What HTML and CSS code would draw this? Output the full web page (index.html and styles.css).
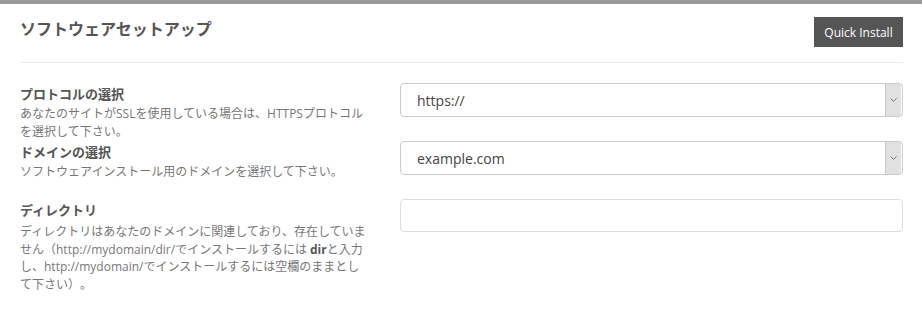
FILE: index.html
```html
<!DOCTYPE html>
<html lang="ja">
<head>
  <meta charset="UTF-8">
  <meta name="viewport" content="width=device-width, initial-scale=1.0">
  <title>ソフトウェアセットアップ</title>
  <link rel="stylesheet" href="styles.css">
</head>
<body>
  <div class="topbar"></div>

  <div class="panel">
    <div class="header">
      <h1>ソフトウェアセットアップ</h1>
      <button class="btn" type="button">Quick Install</button>
    </div>

    <div class="form">
      <div class="row">
        <div class="info">
          <div class="label">プロトコルの選択</div>
          <div class="desc">あなたのサイトがSSLを使用している場合は、HTTPSプロトコル<br>を選択して下さい。</div>
        </div>
        <div class="field">
          <div class="select">
            <select id="protocol">
              <option>https://</option>
              <option>http://</option>
            </select>
            <span class="arrow">
              <svg width="7" height="4" viewBox="0 0 7 4"><path d="M0.5 0.5 L3.5 3.3 L6.5 0.5" fill="none" stroke="#777" stroke-width="1"/></svg>
            </span>
          </div>
        </div>
      </div>

      <div class="row">
        <div class="info">
          <div class="label">ドメインの選択</div>
          <div class="desc">ソフトウェアインストール用のドメインを選択して下さい。</div>
        </div>
        <div class="field">
          <div class="select">
            <select id="domain">
              <option>example.com</option>
            </select>
            <span class="arrow">
              <svg width="7" height="4" viewBox="0 0 7 4"><path d="M0.5 0.5 L3.5 3.3 L6.5 0.5" fill="none" stroke="#777" stroke-width="1"/></svg>
            </span>
          </div>
        </div>
      </div>

      <div class="row">
        <div class="info">
          <div class="label">ディレクトリ</div>
          <div class="desc desc-long">ディレクトリはあなたのドメインに関連しており、存在していま<br>せん（http://mydomain/dir/でインストールするには <b>dir</b>と入力<br>し、http://mydomain/でインストールするには空欄のままとし<br>て下さい）。</div>
        </div>
        <div class="field">
          <input class="input" type="text" id="directory">
        </div>
      </div>
    </div>
  </div>
</body>
</html>
```

FILE: styles.css
```css
body {
  font-family: "Open Sans", "Noto Sans CJK JP", sans-serif;
  margin: 0;
  background-color: #fff;
  color: #555;
  text-spacing-trim: space-all;
}
.topbar {
  height: 4px;
  background-color: #9a9a9a;
}
.panel {
  padding: 0 19px 0 20px;
}
.header {
  display: flex;
  justify-content: space-between;
  align-items: flex-start;
  padding: 13px 0 15px;
  border-bottom: 1px solid #ebebeb;
}
.header h1 {
  margin: 0;
  font-size: 16px;
  line-height: 24px;
  font-weight: bold;
  color: #555;
}
.btn {
  height: 30px;
  width: 89px;
  padding: 0;
  border: none;
  background-color: #555;
  color: #fff;
  font-family: "Open Sans", sans-serif;
  font-size: 12px;
}
.form {
  margin-top: 20px;
}
.row {
  display: flex;
  gap: 20px;
  min-height: 58px;
}
.info {
  width: 360px;
  flex-shrink: 0;
}
.label {
  font-size: 13px;
  font-weight: bold;
  line-height: 22px;
  color: #555;
}
.desc {
  font-size: 12px;
  line-height: 17.5px;
  color: #777;
}
.desc-long {
  margin-top: 2px;
}
.desc b {
  color: #555;
}
.field {
  flex: 1;
}
.select {
  display: flex;
  height: 34px;
  box-sizing: border-box;
  border: 1px solid #ccc;
  border-radius: 4px;
  background-color: #fff;
}
.select select {
  flex: 1;
  appearance: none;
  border: none;
  background: transparent;
  padding: 0 0 0 16px;
  font-family: "Open Sans", sans-serif;
  font-size: 14px;
  color: #444;
  outline: none;
}
.arrow {
  width: 15px;
  margin: 0 1px 0 0;
  display: flex;
  align-items: center;
  justify-content: center;
  background-color: #e1e1e1;
  border-left: 1px solid #c9c9c9;
}
.input {
  display: block;
  width: 100%;
  height: 33px;
  box-sizing: border-box;
  border: 1px solid #ddd;
  border-radius: 4px;
  padding: 0 16px;
  font-family: "Open Sans", sans-serif;
  font-size: 14px;
}
```
